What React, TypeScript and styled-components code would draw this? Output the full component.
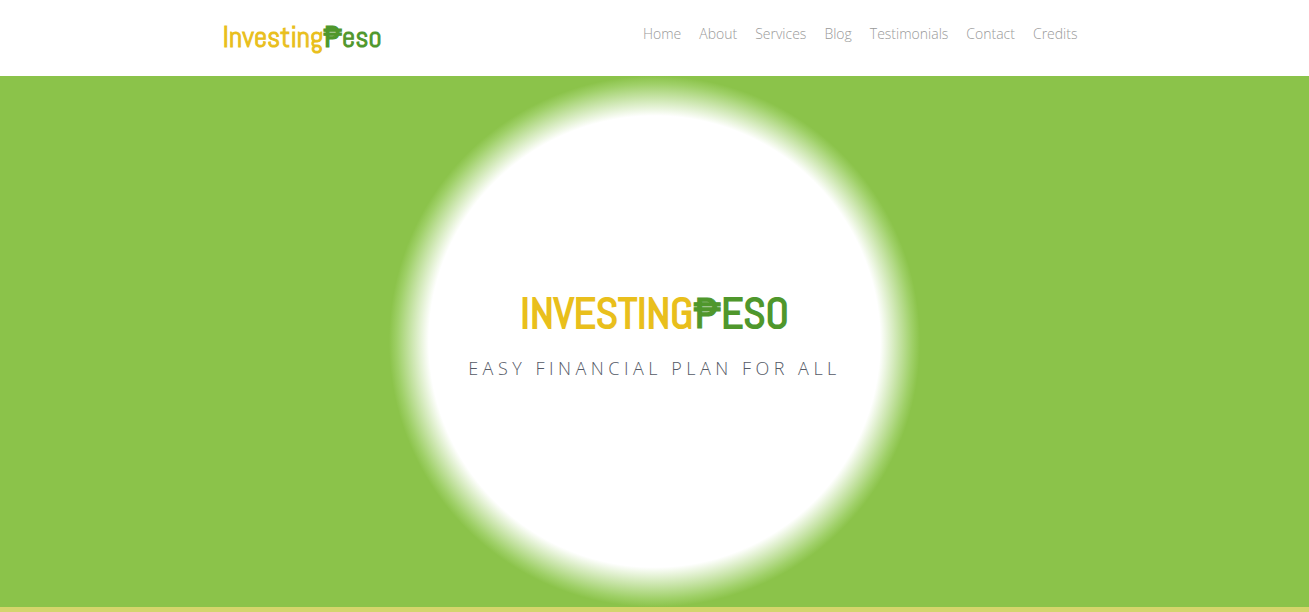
import React from "react";
import styled, { createGlobalStyle } from "styled-components";

const GlobalStyle = createGlobalStyle`
  * { box-sizing: border-box; }
  body {
    margin: 0;
    background: #fff;
    font-family: "Open Sans", sans-serif;
    font-weight: 300;
  }
`;

const Header = styled.header`
  width: 66%;
  min-height: 76px;
  margin: 0 auto;
  display: flex;
  justify-content: space-between;
`;

const Brand = styled.a`
  padding-top: 20px;
  color: #e9bf1c;
  font: 400 29px/36px Abel, "Roboto Condensed", sans-serif;
  -webkit-text-stroke: 1px;
  text-decoration: none;
  white-space: nowrap;
`;

const Green = styled.span`
  color: #4f972c;
`;

const Peso = styled.span`
  -webkit-text-stroke: 1px;
`;

const Nav = styled.nav`
  display: flex;
  gap: 18px;
  padding: 24px 9px 0 0;
`;

const NavLink = styled.a`
  color: #999;
  font-size: 14px;
  line-height: 20px;
  text-decoration: none;
`;

const Hero = styled.main`
  min-height: 531px;
  padding-bottom: 12px;
  display: flex;
  flex-direction: column;
  align-items: center;
  justify-content: center;
  text-align: center;
  background: radial-gradient(circle closest-side, #fff 85%, #9fd068 97%, #8bc34a 100%);
`;

const Title = styled.h1`
  margin: 0;
  color: #e9bf1c;
  font: 400 43px/48px Abel, "Roboto Condensed", sans-serif;
  -webkit-text-stroke: 2px;
  text-transform: uppercase;
`;

const Tagline = styled.p`
  margin: 16px 0 0;
  color: #555a66;
  font-size: 18px;
  line-height: 28px;
  letter-spacing: 0.25em;
  text-transform: uppercase;
`;

const Strip = styled.div`
  height: 5px;
  background: #d4d56c;
`;

const links = ["Home", "About", "Services", "Blog", "Testimonials", "Contact", "Credits"];

const Wordmark = () => (
  <>
    Investing<Green><Peso>₱</Peso>eso</Green>
  </>
);

export default function App() {
  return (
    <>
      <GlobalStyle />
      <Header>
        <Brand href="#home"><Wordmark /></Brand>
        <Nav>
          {links.map((label) => (
            <NavLink key={label} href={`#${label.toLowerCase()}`}>{label}</NavLink>
          ))}
        </Nav>
      </Header>
      <Hero>
        <Title><Wordmark /></Title>
        <Tagline>Easy financial plan for all</Tagline>
      </Hero>
      <Strip />
    </>
  );
}
